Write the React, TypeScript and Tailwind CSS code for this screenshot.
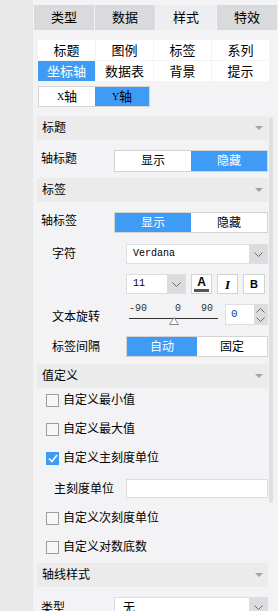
import React from 'react'

const BLUE = 'bg-[#3f9cf6] text-white'

function Caret() {
  return <div className="h-0 w-0 border-x-[4px] border-t-[4px] border-x-transparent border-t-[#a3a3a3]" />
}

function Chevron({ up = false }: { up?: boolean }) {
  return (
    <svg width="9" height="5" viewBox="0 0 9 5" className="block">
      <polyline
        points={up ? '0.5,4.5 4.5,0.5 8.5,4.5' : '0.5,0.5 4.5,4.5 8.5,0.5'}
        fill="none"
        stroke="#6b6b6b"
        strokeWidth="1"
      />
    </svg>
  )
}

function SectionHeader({ title, className = '' }: { title: string; className?: string }) {
  return (
    <div className={`flex h-[24px] items-center justify-between bg-[#ebebeb] pl-[5px] pr-[5px] ${className}`}>
      <span>{title}</span>
      <Caret />
    </div>
  )
}

function Toggle({ left, right, active, className = '' }: { left: string; right: string; active: 0 | 1; className?: string }) {
  return (
    <div className={`flex border border-[#d3d3d3] bg-white ${className}`}>
      <div className={`flex flex-1 items-center justify-center ${active === 0 ? BLUE : ''}`}>{left}</div>
      <div className={`flex flex-1 items-center justify-center ${active === 1 ? BLUE : ''}`}>{right}</div>
    </div>
  )
}

function Check({ label, checked = false, className = '' }: { label: string; checked?: boolean; className?: string }) {
  return (
    <div className={`flex h-[12px] items-center pl-[9px] ${className}`}>
      {checked ? (
        <div className="flex h-[13px] w-[13px] items-center justify-center bg-[#3f9cf6]">
          <svg width="10" height="9" viewBox="0 0 10 9">
            <polyline points="1,4.5 4,7.5 9,1" fill="none" stroke="white" strokeWidth="1.6" />
          </svg>
        </div>
      ) : (
        <div className="h-[13px] w-[13px] border border-[#9d9d9d] bg-[#f7f7f8]" />
      )}
      <span className="ml-[4px]">{label}</span>
    </div>
  )
}

export default function App() {
  const tabs = ['类型', '数据', '样式', '特效']
  const subTabs = ['标题', '图例', '标签', '系列', '坐标轴', '数据表', '背景', '提示']

  return (
    <div className="flex h-[611px] w-[278px] overflow-hidden bg-[#f3f3f5] font-['Liberation_Sans','Noto_Sans_CJK_SC',sans-serif] text-[12px] leading-none text-black">
      <div className="w-[33px] shrink-0 bg-[#e8e8e8]" />

      <div className="flex flex-1 flex-col">
        {/* top tabs */}
        <div className="mt-[5px] flex shrink-0 gap-px pl-px">
          {tabs.map((t) => (
            <div
              key={t}
              className={`flex h-[25px] w-[60px] items-center justify-center text-[13px] ${t === '样式' ? 'bg-[#eeeef0]' : 'bg-[#d9dadc]'}`}
            >
              {t}
            </div>
          ))}
        </div>

        {/* sub tabs */}
        <div className="ml-[5px] mt-[10px] grid w-[231px] shrink-0 grid-cols-4 gap-px">
          {subTabs.map((t) => (
            <div
              key={t}
              className={`flex h-[20px] items-center justify-center text-[13px] ${t === '坐标轴' ? BLUE : 'bg-white'}`}
            >
              {t}
            </div>
          ))}
        </div>

        {/* axis switch */}
        <div className="ml-[5px] mt-[5px] flex h-[21px] w-[112px] shrink-0 border border-[#d6d6d6]">
          <div className="flex w-[56px] items-center justify-center bg-white text-[13px]">
            <span className="font-['Liberation_Serif',serif] text-[10px]">X</span>轴
          </div>
          <div className={`flex flex-1 items-center justify-center text-[13px] ${BLUE.replace('text-white', 'text-black')}`}>
            <span className="font-['Liberation_Serif',serif] text-[10px]">Y</span>轴
          </div>
        </div>

        <div className="mt-[9px] flex shrink-0">
          {/* content */}
          <div className="ml-[4px] w-[231px]">
            <SectionHeader title="标题" />
            <div className="flex pb-[6px] pt-[10px]">
              <span className="ml-[4px] mt-[3px] w-[73px]">轴标题</span>
              <Toggle left="显示" right="隐藏" active={1} className="h-[22px] flex-1" />
            </div>

            <SectionHeader title="标签" />
            <div className="flex pt-[10px]">
              <span className="ml-[4px] mt-[3px] w-[73px]">轴标签</span>
              <Toggle left="显示" right="隐藏" active={0} className="h-[21px] flex-1" />
            </div>

            {/* font */}
            <div className="mt-[11px] flex h-[20px] items-center">
              <span className="ml-[15px] w-[74px]">字符</span>
              <div className="flex h-[20px] flex-1 border border-[#dedede] bg-white">
                <div className="flex flex-1 items-center pl-[6px] font-['Liberation_Mono',monospace] text-[10px]">Verdana</div>
                <div className="flex w-[18px] items-center justify-center bg-[#dcdcde]">
                  <Chevron />
                </div>
              </div>
            </div>

            {/* size + styles */}
            <div className="mt-[10px] flex h-[20px] items-center">
              <div className="ml-[89px] flex h-[20px] w-[60px] border border-[#dedede] bg-white">
                <div className="flex flex-1 items-center pl-[6px] font-['Liberation_Mono',monospace] text-[10px]">11</div>
                <div className="flex w-[18px] items-center justify-center bg-[#dcdcde]">
                  <Chevron />
                </div>
              </div>
              <div className="ml-[5px] flex h-[20px] w-[21px] flex-col items-center justify-center border border-[#d3d3d3] bg-white">
                <span className="text-[12px] font-bold leading-none">A</span>
                <div className="mt-px h-[3px] w-[15px] bg-[#555555]" />
              </div>
              <div className="ml-[5px] flex h-[20px] w-[21px] items-center justify-center border border-[#d3d3d3] bg-white font-['Liberation_Serif',serif] text-[13px] font-bold italic">
                I
              </div>
              <div className="ml-[5px] flex h-[20px] w-[22px] items-center justify-center border border-[#d3d3d3] bg-white text-[11px] font-bold">
                B
              </div>
            </div>

            {/* rotation */}
            <div className="mt-[10px] flex h-[21px]">
              <span className="ml-[15px] mt-[7px] w-[77px]">文本旋转</span>
              <div className="relative w-[89px]">
                <div className="flex justify-between font-['Liberation_Mono',monospace] text-[10px] text-[#333]">
                  <span>-90</span>
                  <span className="ml-[8px]">0</span>
                  <span className="mr-[5px]">90</span>
                </div>
                <div className="mt-[4px] h-px w-[89px] bg-[#333]" />
                <svg width="10" height="8" viewBox="0 0 10 8" className="absolute left-[40px] top-[13px]">
                  <polygon points="5,0.5 9.5,7.5 0.5,7.5" fill="white" stroke="#8a8a8a" strokeWidth="1" />
                </svg>
              </div>
              <div className="ml-[7px] flex h-[21px] flex-1 border border-[#dedede] bg-white">
                <div className="flex flex-1 items-center pl-[5px] font-['Liberation_Mono',monospace] text-[11px] text-[#0a3d8f]">0</div>
                <div className="flex w-[13px] flex-col items-center justify-center gap-[4px] bg-[#dcdcde]">
                  <Chevron up />
                  <Chevron />
                </div>
              </div>
            </div>

            {/* interval */}
            <div className="mt-[11px] flex h-[21px] items-center">
              <span className="ml-[15px] w-[74px]">标签间隔</span>
              <Toggle left="自动" right="固定" active={0} className="h-[21px] flex-1" />
            </div>

            <SectionHeader title="值定义" className="mt-[7px]" />
            <Check label="自定义最小值" className="mt-[6px]" />
            <Check label="自定义最大值" className="mt-[17px]" />
            <Check label="自定义主刻度单位" checked className="mt-[17px]" />

            <div className="mt-[15px] flex h-[19px] items-center">
              <span className="ml-[17px] w-[72px]">主刻度单位</span>
              <div className="h-[19px] flex-1 border border-[#dcdcdc] bg-white" />
            </div>

            <Check label="自定义次刻度单位" className="mt-[14px]" />
            <Check label="自定义对数底数" className="mt-[17px]" />

            <SectionHeader title="轴线样式" className="mt-[10px]" />
            <div className="mt-[10px] flex h-[21px] items-center">
              <span className="ml-[4px] w-[73px]">类型</span>
              <div className="flex h-[21px] flex-1 border border-[#dedede] bg-white">
                <div className="flex flex-1 items-center pl-[8px]">无</div>
                <div className="flex w-[18px] items-center justify-center bg-[#dcdcde]">
                  <Chevron />
                </div>
              </div>
            </div>
          </div>

          {/* scrollbar */}
          <div className="ml-px mt-px h-[386px] w-[4px] rounded-full bg-[#dfdfe1]" />
        </div>
      </div>
    </div>
  )
}
